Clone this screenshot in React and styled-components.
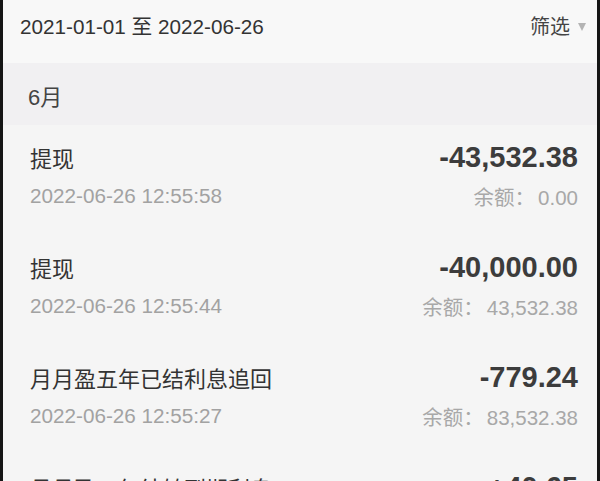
import React from "react"
import styled, { createGlobalStyle } from "styled-components"

const GlobalStyle = createGlobalStyle`
  html, body {
    margin: 0;
    padding: 0;
    height: 481px;
    overflow: hidden;
    background: #151515;
  }

  body {
    font-family: "Liberation Sans", "Noto Sans CJK SC", sans-serif;
  }
`

const records = [
  {
    id: 1,
    title: "提现",
    time: "2022-06-26 12:55:58",
    amount: "-43,532.38",
    balance: "0.00",
  },
  {
    id: 2,
    title: "提现",
    time: "2022-06-26 12:55:44",
    amount: "-40,000.00",
    balance: "43,532.38",
  },
  {
    id: 3,
    title: "月月盈五年已结利息追回",
    time: "2022-06-26 12:55:27",
    amount: "-779.24",
    balance: "83,532.38",
  },
  {
    id: 4,
    title: "月月盈五年结转到期利息",
    time: "2022-06-26 12:55:12",
    amount: "+40.65",
    balance: "84,311.62",
  },
]

const Frame = styled.div`
  margin: 0 3px;
  height: 481px;
  overflow: hidden;
  background: #f5f5f5;
`

const FilterBar = styled.header`
  display: flex;
  justify-content: space-between;
  align-items: flex-start;
  height: 63px;
  box-sizing: border-box;
  padding: 14px 11px 0 17px;
  background: #f8f8f8;
`

const Range = styled.div`
  font-size: 20.7px;
  line-height: 26px;
  color: #333;
`

const FilterButton = styled.div`
  display: flex;
  align-items: center;
  gap: 8px;
  font-size: 20px;
  line-height: 26px;
  color: #444;
`

const Caret = styled.span`
  width: 0;
  height: 0;
  border-left: 4px solid transparent;
  border-right: 4px solid transparent;
  border-top: 8px solid #b4b4b4;
`

const MonthBand = styled.div`
  height: 62px;
  box-sizing: border-box;
  padding: 22px 25px 0;
  font-size: 22px;
  line-height: 26px;
  color: #444;
  background: #f1f0f2;
`

const Row = styled.div`
  display: grid;
  grid-template-columns: 1fr auto;
  grid-template-rows: 30px 30px;
  row-gap: 9px;
  padding: 17px 19px 24px 27px;
  align-items: center;
`

const Title = styled.div`
  font-size: 22px;
  color: #333;
`

const Amount = styled.div`
  text-align: right;
  font-size: 29px;
  font-weight: bold;
  color: #3c3c3c;
`

const Time = styled.div`
  font-size: 20.7px;
  color: #a2a2a2;
`

const Balance = styled.div`
  text-align: right;
  font-size: 20.5px;
  color: #a8a8a8;
`

const Label = styled.span`
  margin-right: 3px;
`

const RecordRow = ({ record }) => (
  <Row>
    <Title>{record.title}</Title>
    <Amount>{record.amount}</Amount>
    <Time>{record.time}</Time>
    <Balance>
      <Label>余额：</Label>
      {record.balance}
    </Balance>
  </Row>
)

const App = () => (
  <>
    <GlobalStyle />
    <Frame>
      <FilterBar>
        <Range>2021-01-01 至 2022-06-26</Range>
        <FilterButton>
          筛选
          <Caret />
        </FilterButton>
      </FilterBar>
      <MonthBand>6月</MonthBand>
      {records.map(record => (
        <RecordRow key={record.id} record={record} />
      ))}
    </Frame>
  </>
)

export default App
